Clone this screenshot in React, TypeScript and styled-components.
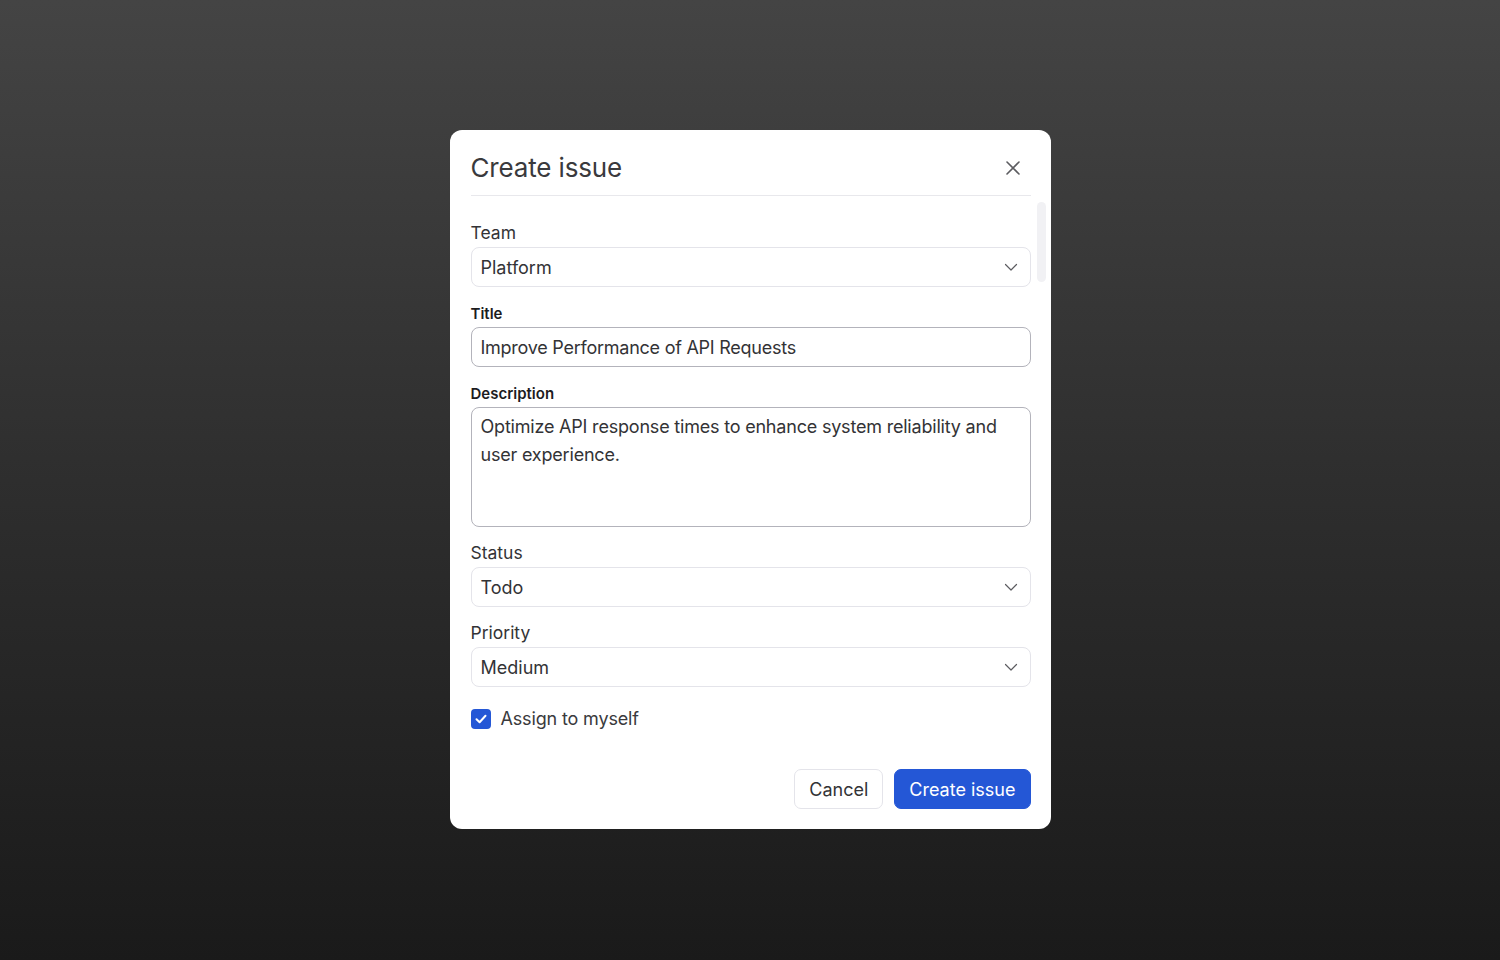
import React from "react";
import styled, { createGlobalStyle } from "styled-components";

const Global = createGlobalStyle`
  html, body { margin: 0; padding: 0; }
  body {
    font-family: Inter, "Noto Sans", "Liberation Sans", sans-serif;
    -webkit-font-smoothing: antialiased;
  }
  * { box-sizing: border-box; }
`;

const Backdrop = styled.div`
  width: 1500px;
  height: 960px;
  background: linear-gradient(180deg, #444444 0%, #2e2e2e 50%, #1a1a1a 100%);
  display: flex;
  justify-content: center;
  align-items: flex-start;
  padding-top: 130px;
`;

const Modal = styled.div`
  position: relative;
  width: 601px;
  height: 699px;
  background: #ffffff;
  border-radius: 12px;
  padding: 0 20px 20px 21px;
  display: flex;
  flex-direction: column;
`;

const Header = styled.div`
  display: flex;
  align-items: center;
  justify-content: space-between;
  padding: 21px 0 10px 0;
  border-bottom: 1px solid #e8e8ec;
`;

const Heading = styled.h2`
  margin: 0;
  font-size: 26px;
  line-height: 34px;
  font-weight: 400;
  color: #3a3a3d;
  letter-spacing: -0.15px;
`;

const CloseButton = styled.button`
  border: none;
  background: transparent;
  padding: 0;
  margin-right: 8px;
  width: 20px;
  height: 20px;
  display: flex;
  align-items: center;
  justify-content: center;
  cursor: pointer;
`;

const ScrollThumb = styled.div`
  position: absolute;
  right: 5px;
  top: 72px;
  width: 9px;
  height: 80px;
  border-radius: 5px;
  background: #f1f1f4;
`;

const Body = styled.div`
  display: flex;
  flex-direction: column;
  padding-top: 26px;
  flex: 1;
`;

const Field = styled.div<{ $strong?: boolean; $tight?: boolean }>`
  display: flex;
  flex-direction: column;
  gap: ${(p) => (p.$strong ? "2px" : "3px")};
  margin-bottom: ${(p) => (p.$tight ? "15px" : "16px")};
`;

const Label = styled.label<{ $strong?: boolean }>`
  font-size: ${(p) => (p.$strong ? "15px" : "17.5px")};
  line-height: 22px;
  font-weight: ${(p) => (p.$strong ? 600 : 400)};
  color: ${(p) => (p.$strong ? "#1c1c1e" : "#333336")};
`;

const SelectBox = styled.div`
  height: 40px;
  border: 1px solid #e4e4ea;
  border-radius: 8px;
  display: flex;
  align-items: center;
  justify-content: space-between;
  padding: 0 12px 0 9px;
  font-size: 18px;
  color: #333336;
  background: #fff;
`;

const TextInput = styled.input`
  height: 40px;
  border: 1px solid #b3b3bb;
  border-radius: 8px;
  padding: 0 9px;
  font-family: inherit;
  font-size: 18px;
  letter-spacing: -0.25px;
  color: #333336;
  outline: none;
  background: #fff;
`;

const TextArea = styled.textarea`
  height: 120px;
  border: 1px solid #b3b3bb;
  border-radius: 8px;
  padding: 5px 9px;
  font-family: inherit;
  font-size: 18px;
  letter-spacing: -0.2px;
  line-height: 28px;
  color: #333336;
  resize: none;
  outline: none;
`;

const CheckRow = styled.label`
  display: flex;
  align-items: center;
  gap: 10px;
  margin-top: 4px;
  font-size: 18px;
  line-height: 24px;
  letter-spacing: -0.15px;
  color: #3a3a3d;
`;

const CheckBox = styled.span`
  width: 20px;
  height: 20px;
  border-radius: 4px;
  background: #2457d6;
  display: flex;
  align-items: center;
  justify-content: center;
`;

const Footer = styled.div`
  margin-top: auto;
  display: flex;
  justify-content: flex-end;
  gap: 11px;
`;

const Button = styled.button<{ $primary?: boolean }>`
  height: 40px;
  padding: 0 14px;
  border-radius: 7px;
  font-family: inherit;
  font-size: 18px;
  cursor: pointer;
  border: 1px solid ${(p) => (p.$primary ? "#2457d6" : "#e4e4ea")};
  background: ${(p) => (p.$primary ? "#2457d6" : "#ffffff")};
  color: ${(p) => (p.$primary ? "#ffffff" : "#333336")};
`;

const Chevron = () => (
  <svg width="14" height="14" viewBox="0 0 14 14" fill="none">
    <path d="M1.5 4.5 L7 10 L12.5 4.5" stroke="#5c5c60" strokeWidth="1.2" strokeLinecap="round" strokeLinejoin="round" />
  </svg>
);

const Select = ({ value }: { value: string }) => (
  <SelectBox>
    <span>{value}</span>
    <Chevron />
  </SelectBox>
);

export default function App() {
  return (
    <>
      <Global />
      <Backdrop>
        <Modal>
          <Header>
            <Heading>Create issue</Heading>
            <CloseButton aria-label="Close">
              <svg width="16" height="16" viewBox="0 0 16 16" fill="none">
                <path d="M2 2 L14 14 M14 2 L2 14" stroke="#5c5c60" strokeWidth="1.6" strokeLinecap="round" />
              </svg>
            </CloseButton>
          </Header>
          <ScrollThumb />
          <Body>
            <Field>
              <Label>Team</Label>
              <Select value="Platform" />
            </Field>
            <Field $strong>
              <Label $strong>Title</Label>
              <TextInput defaultValue="Improve Performance of API Requests" />
            </Field>
            <Field $strong $tight>
              <Label $strong>Description</Label>
              <TextArea defaultValue="Optimize API response times to enhance system reliability and user experience." />
            </Field>
            <Field $tight>
              <Label>Status</Label>
              <Select value="Todo" />
            </Field>
            <Field>
              <Label>Priority</Label>
              <Select value="Medium" />
            </Field>
            <CheckRow>
              <CheckBox>
                <svg width="14" height="14" viewBox="0 0 14 14" fill="none">
                  <path d="M2.5 7.2 L5.6 10.2 L11.5 3.8" stroke="#fff" strokeWidth="2" strokeLinecap="round" strokeLinejoin="round" />
                </svg>
              </CheckBox>
              Assign to myself
            </CheckRow>
            <Footer>
              <Button>Cancel</Button>
              <Button $primary>Create issue</Button>
            </Footer>
          </Body>
        </Modal>
      </Backdrop>
    </>
  );
}
